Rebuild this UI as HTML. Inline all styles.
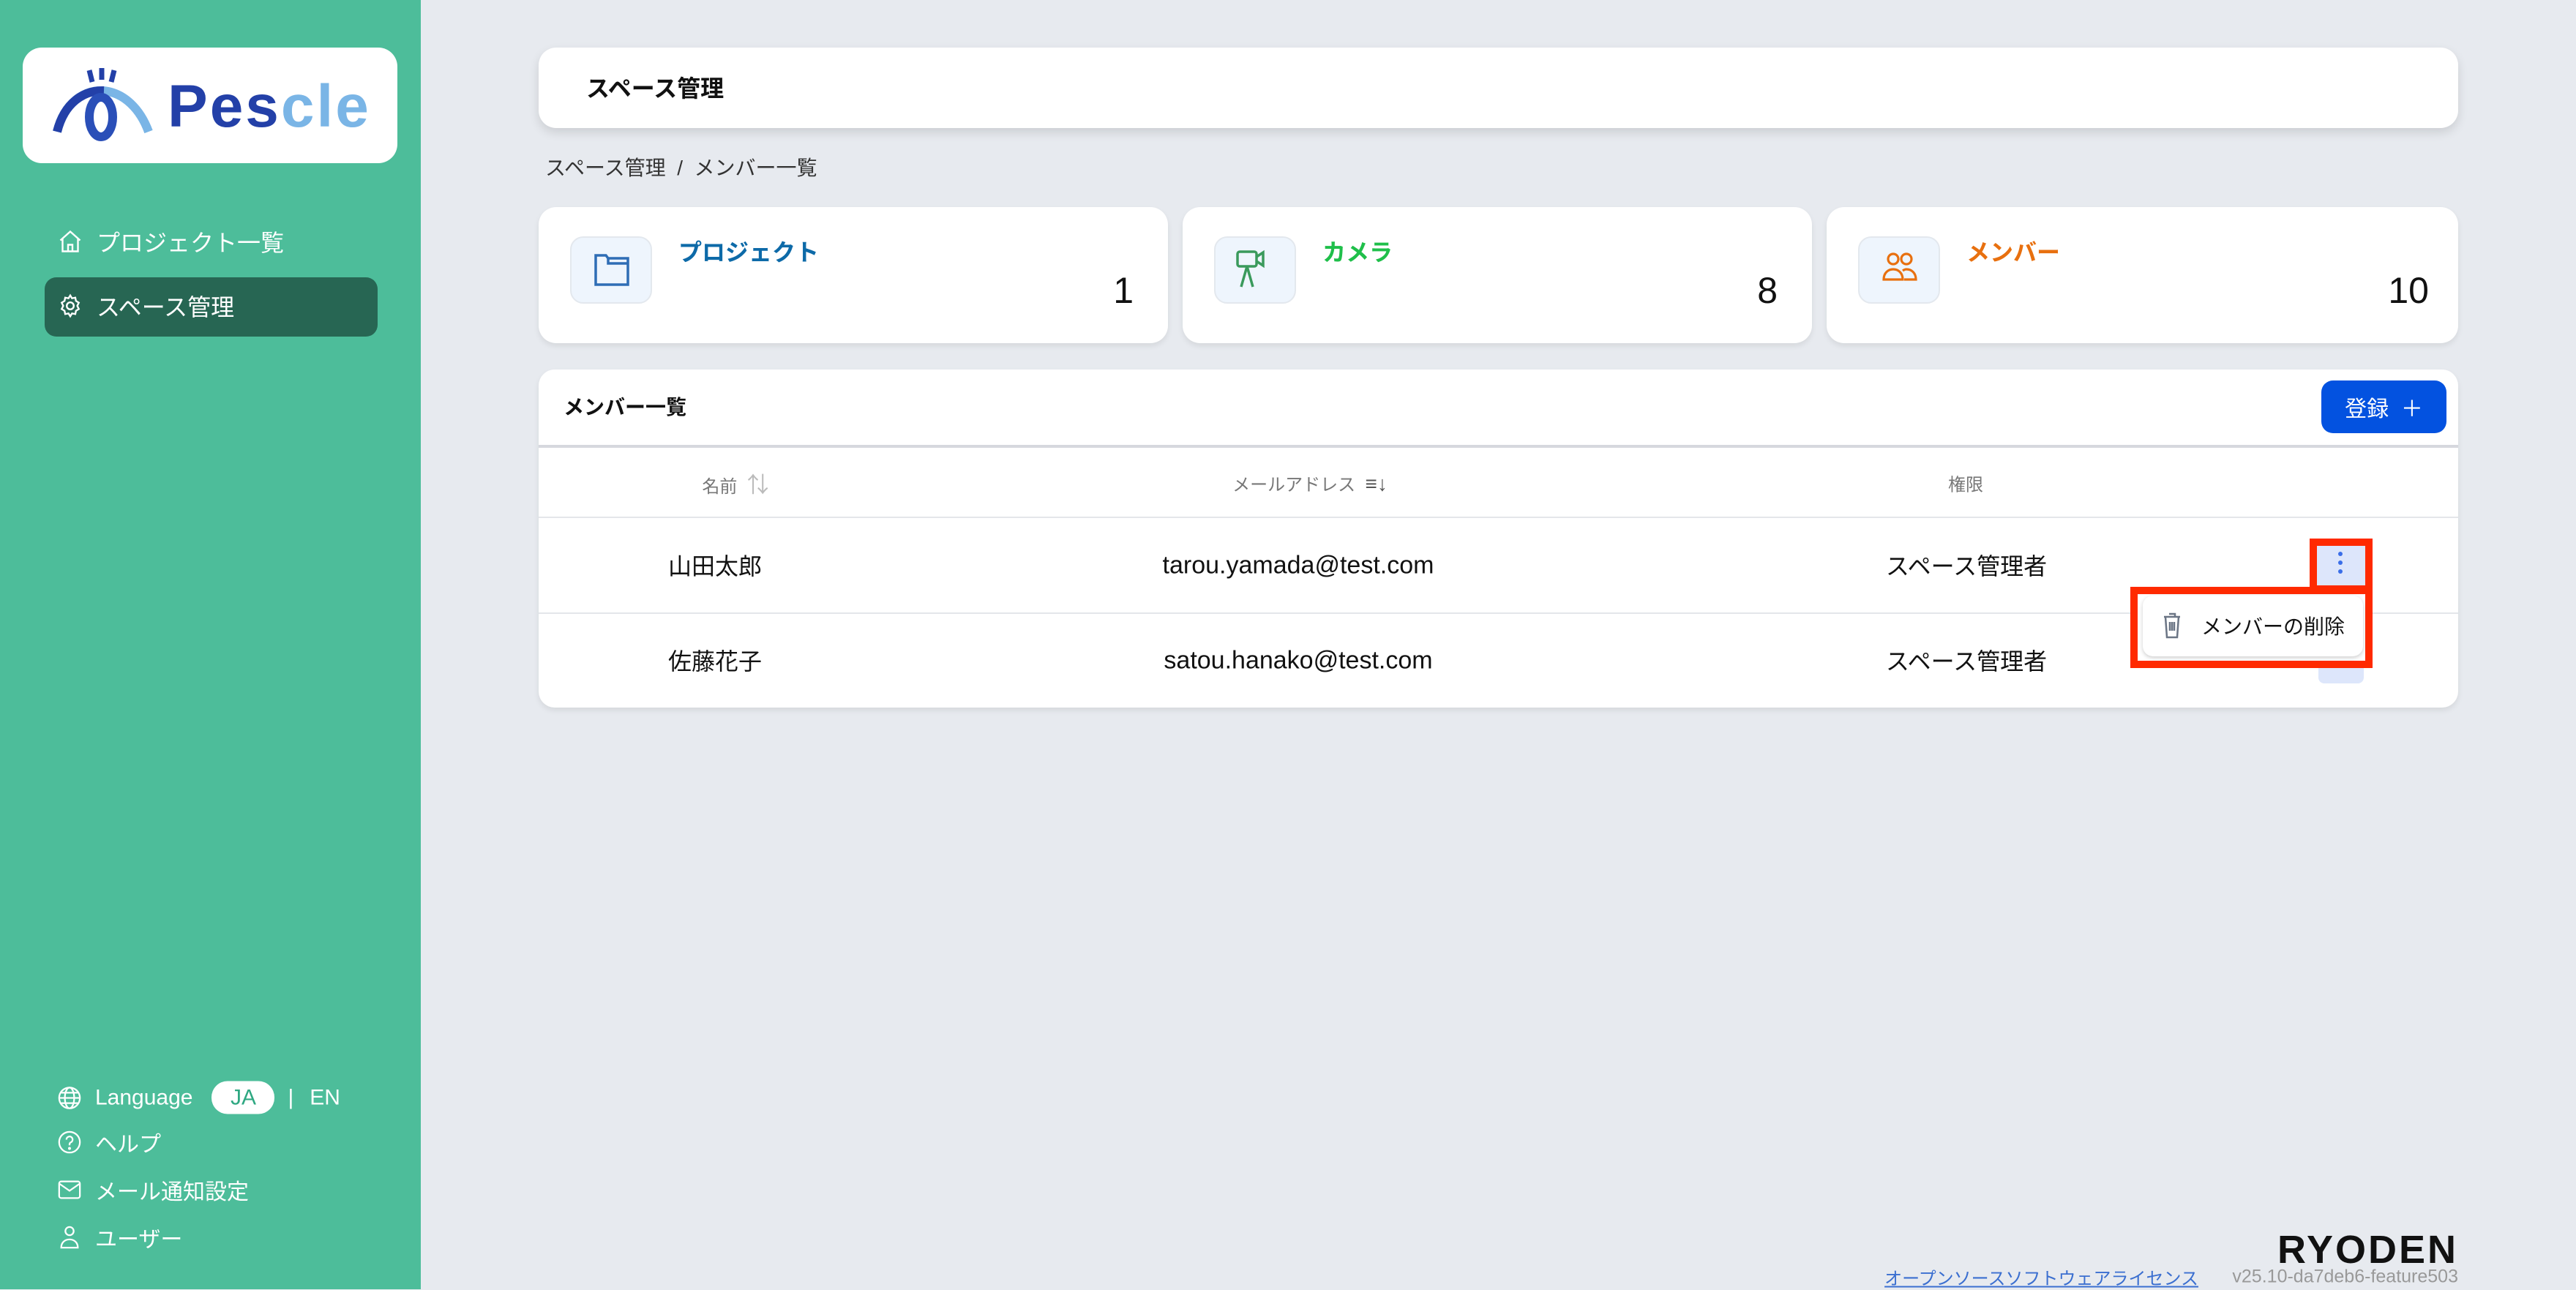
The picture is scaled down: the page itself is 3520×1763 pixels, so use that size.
<!DOCTYPE html>
<html><head><meta charset="utf-8">
<style>
*{margin:0;padding:0;box-sizing:border-box}
body{width:3520px;height:1762px;overflow:hidden;background:#e7eaef;font-family:"Liberation Sans","Noto Sans CJK JP",sans-serif;position:relative}
.a{position:absolute}
.side{left:0;top:0;width:575px;height:1762px;background:#4dbd9a}
.card{background:#fff;border-radius:24px;box-shadow:0 4px 8px rgba(0,0,0,.08)}
.nav{color:#fff;font-size:32px;display:flex;align-items:center}
.vc{transform:translateY(-50%);white-space:nowrap}
.cc{transform:translate(-50%,-50%);white-space:nowrap}
</style></head><body>
<div class="a side"></div>
<div class="a" style="left:31px;top:65px;width:512px;height:158px;background:#fff;border-radius:26px"></div>
<svg class="a" style="left:70px;top:90px" width="150" height="105" viewBox="0 0 150 105">
<path d="M52 6 L56 22 M69 3 L69 19 M86 6 L82 22" stroke="#2340a8" stroke-width="7"/>
<path d="M8 90 C18 50 45 33 70 34 C100 36 122 60 133 90" fill="none" stroke="#7ab5e6" stroke-width="12"/>
<path d="M8 90 C18 50 45 33 72 34" fill="none" stroke="#2340a8" stroke-width="12"/>
<ellipse cx="68" cy="70" rx="16" ry="27" fill="none" stroke="#2a4fb8" stroke-width="12"/>
</svg>
<div class="a" style="left:229px;top:96px;font-size:82px;font-weight:bold;letter-spacing:3px;line-height:100px"><span style="color:#2340a8">Pes</span><span style="color:#7ab5e6">cle</span></div>

<div class="a nav vc" style="left:78px;top:330px"><svg width="36" height="36" viewBox="0 0 24 24" fill="none" stroke="#fff" stroke-width="1.6"><path d="M3 11 L12 3 L21 11 M5 9 V21 H19 V9 M10 21 V15 H14 V21"/></svg><span style="margin-left:18px">プロジェクト一覧</span></div>
<div class="a" style="left:61px;top:379px;width:455px;height:81px;background:#276653;border-radius:16px"></div>
<div class="a nav vc" style="left:78px;top:418px"><svg width="36" height="36" viewBox="0 0 24 24" fill="none" stroke="#fff" stroke-width="1.6"><circle cx="12" cy="12" r="3.2"/><path d="M12 2.5l1.6 2.6 3-.6.6 3 2.6 1.6-1.4 2.9 1.4 2.9-2.6 1.6-.6 3-3-.6L12 21.5l-1.6-2.6-3 .6-.6-3-2.6-1.6L5.6 12 4.2 9.1l2.6-1.6.6-3 3 .6z"/></svg><span style="margin-left:18px">スペース管理</span></div>

<div class="a nav vc" style="left:78px;top:1500px;font-size:30px"><svg width="34" height="34" viewBox="0 0 24 24" fill="none" stroke="#fff" stroke-width="1.6"><circle cx="12" cy="12" r="10"/><ellipse cx="12" cy="12" rx="4.5" ry="10"/><path d="M2 12H22M4 7H20M4 17H20"/></svg><span style="margin-left:18px">Language</span><span style="margin-left:26px;background:#fff;color:#2fa882;border-radius:22px;width:86px;height:45px;display:inline-flex;align-items:center;justify-content:center">JA</span><span style="margin-left:18px">|</span><span style="margin-left:22px">EN</span></div>
<div class="a nav vc" style="left:78px;top:1561px;font-size:30px"><svg width="34" height="34" viewBox="0 0 24 24" fill="none" stroke="#fff" stroke-width="1.6"><circle cx="12" cy="12" r="10"/><path d="M9 9.5a3 3 0 1 1 4 2.8c-.8.4-1 1-1 2V15"/><circle cx="12" cy="18" r=".6" fill="#fff"/></svg><span style="margin-left:18px">ヘルプ</span></div>
<div class="a nav vc" style="left:78px;top:1626px;font-size:30px"><svg width="34" height="34" viewBox="0 0 24 24" fill="none" stroke="#fff" stroke-width="1.6"><rect x="2" y="4" width="20" height="16" rx="2"/><path d="M2 6L12 13L22 6"/></svg><span style="margin-left:18px">メール通知設定</span></div>
<div class="a nav vc" style="left:78px;top:1691px;font-size:30px"><svg width="34" height="34" viewBox="0 0 24 24" fill="none" stroke="#fff" stroke-width="1.6"><circle cx="12" cy="6" r="4"/><path d="M4 22c0-5 3.5-8 8-8s8 3 8 8z"/></svg><span style="margin-left:18px">ユーザー</span></div>

<div class="a card" style="left:736px;top:65px;width:2623px;height:110px;box-shadow:0 6px 14px rgba(0,0,0,.12)"></div>
<div class="a vc" style="left:801px;top:119px;font-size:32px;font-weight:bold;color:#111">スペース管理</div>
<div class="a vc" style="left:745px;top:228px;font-size:28px;color:#333">スペース管理 &nbsp;/&nbsp; メンバー一覧</div>

<div class="a card" style="left:736px;top:283px;width:860px;height:186px"></div>
<div class="a card" style="left:1616px;top:283px;width:860px;height:186px"></div>
<div class="a card" style="left:2496px;top:283px;width:863px;height:186px"></div>
<div class="a" style="left:779px;top:323px;width:112px;height:92px;background:#eef5fd;border:2px solid #e3e8ee;border-radius:18px"></div>
<div class="a" style="left:1659px;top:323px;width:112px;height:92px;background:#eef5fd;border:2px solid #e3e8ee;border-radius:18px"></div>
<div class="a" style="left:2539px;top:323px;width:112px;height:92px;background:#eef5fd;border:2px solid #e3e8ee;border-radius:18px"></div>
<svg class="a" style="left:811px;top:346px" width="50" height="46" viewBox="0 0 50 46" fill="none" stroke="#2e6db5" stroke-width="3.5"><path d="M3 3H17L20 7H47V43H3Z M20 7V14H47"/></svg>
<svg class="a" style="left:1688px;top:340px" width="52" height="56" viewBox="0 0 52 56" fill="none" stroke="#3a9a5c" stroke-width="3.5"><rect x="3" y="4" width="26" height="20" rx="3"/><path d="M29 11L38 5V23L29 17 M16 24L8 52 M16 24L24 52"/></svg>
<svg class="a" style="left:2570px;top:342px" width="52" height="46" viewBox="0 0 52 46" fill="none" stroke="#e8700f" stroke-width="3.2"><circle cx="17" cy="12" r="7"/><circle cx="35" cy="12" r="7"/><path d="M4 40c0-9 6-14 13-14s13 5 13 14z M30 28c2-1.5 3-2 5-2 7 0 13 5 13 14H32"/></svg>
<div class="a vc" style="left:927px;top:343px;font-size:32px;font-weight:bold;color:#0d6aa8">プロジェクト</div>
<div class="a vc" style="left:1807px;top:343px;font-size:32px;font-weight:bold;color:#1fbf4a">カメラ</div>
<div class="a vc" style="left:2687px;top:343px;font-size:32px;font-weight:bold;color:#e8700f">メンバー</div>
<div class="a vc" style="right:1971px;top:397px;font-size:50px;color:#111">1</div>
<div class="a vc" style="right:1091px;top:397px;font-size:50px;color:#111">8</div>
<div class="a vc" style="right:201px;top:397px;font-size:50px;color:#111">10</div>

<div class="a card" style="left:736px;top:505px;width:2623px;height:462px;border-radius:22px"></div>
<div class="a vc" style="left:770px;top:555px;font-size:28px;font-weight:bold;color:#111">メンバー一覧</div>
<div class="a" style="left:3172px;top:520px;width:171px;height:72px;background:#0352e0;border-radius:16px;color:#fff;font-size:30px;display:flex;align-items:center;justify-content:center">登録 &nbsp;＋</div>
<div class="a" style="left:736px;top:608px;width:2623px;height:4px;background:#d6d8de"></div>
<div class="a cc" style="left:1005px;top:660px;font-size:24px;color:#777">名前 &nbsp;<span style="color:#bbb;font-size:30px">⇅</span></div>
<div class="a cc" style="left:1790px;top:660px;font-size:24px;color:#777">メールアドレス &nbsp;<span style="font-size:28px;color:#555">≡↓</span></div>
<div class="a cc" style="left:2686px;top:660px;font-size:24px;color:#777">権限</div>
<div class="a" style="left:736px;top:706px;width:2623px;height:2px;background:#e4e6ea"></div>
<div class="a" style="left:736px;top:837px;width:2623px;height:2px;background:#e4e6ea"></div>
<div class="a cc" style="left:977px;top:772px;font-size:32px;color:#111">山田太郎</div>
<div class="a cc" style="left:1774px;top:773px;font-size:34px;color:#111">tarou.yamada@test.com</div>
<div class="a cc" style="left:2687px;top:772px;font-size:32px;color:#111">スペース管理者</div>
<div class="a cc" style="left:977px;top:902px;font-size:32px;color:#111">佐藤花子</div>
<div class="a cc" style="left:1774px;top:903px;font-size:34px;color:#111">satou.hanako@test.com</div>
<div class="a cc" style="left:2687px;top:902px;font-size:32px;color:#111">スペース管理者</div>

<div class="a" style="left:3168px;top:870px;width:62px;height:64px;background:#dde6fb;border-radius:8px"></div>
<div class="a" style="left:3156px;top:736px;width:86px;height:74px;border:10px solid #ff2a00;background:#dde6fb"></div>
<svg class="a" style="left:3193px;top:752px" width="10" height="40"><circle cx="5" cy="5" r="3" fill="#3a6ee8"/><circle cx="5" cy="17" r="3" fill="#3a6ee8"/><circle cx="5" cy="29" r="3" fill="#3a6ee8"/></svg>
<div class="a" style="left:2911px;top:802px;width:331px;height:111px;background:#ff2a00"></div>
<div class="a" style="left:2921px;top:812px;width:311px;height:91px;background:#fff"></div>
<div class="a" style="left:2928px;top:814px;width:301px;height:83px;background:#fff;border-radius:14px;box-shadow:0 2px 6px rgba(0,0,0,.2)"></div>
<svg class="a" style="left:2955px;top:836px" width="26" height="38" viewBox="0 0 26 38" fill="none" stroke="#6b7585" stroke-width="2.5"><path d="M9 3H17V7 M2 7H24 M4 7L6 35H20L22 7 M10 14V26 M13 14V26 M16 14V26"/></svg>
<div class="a vc" style="left:3008px;top:855px;font-size:28px;color:#111">メンバーの削除</div>

<div class="a" style="right:161px;top:1677px;font-size:54px;font-weight:bold;color:#111;letter-spacing:3px">RYODEN</div>
<div class="a vc" style="right:516px;top:1745px;font-size:24px;color:#3b6fd0;text-decoration:underline">オープンソースソフトウェアライセンス</div>
<div class="a vc" style="right:161px;top:1745px;font-size:25px;color:#999">v25.10-da7deb6-feature503</div>
</body></html>
